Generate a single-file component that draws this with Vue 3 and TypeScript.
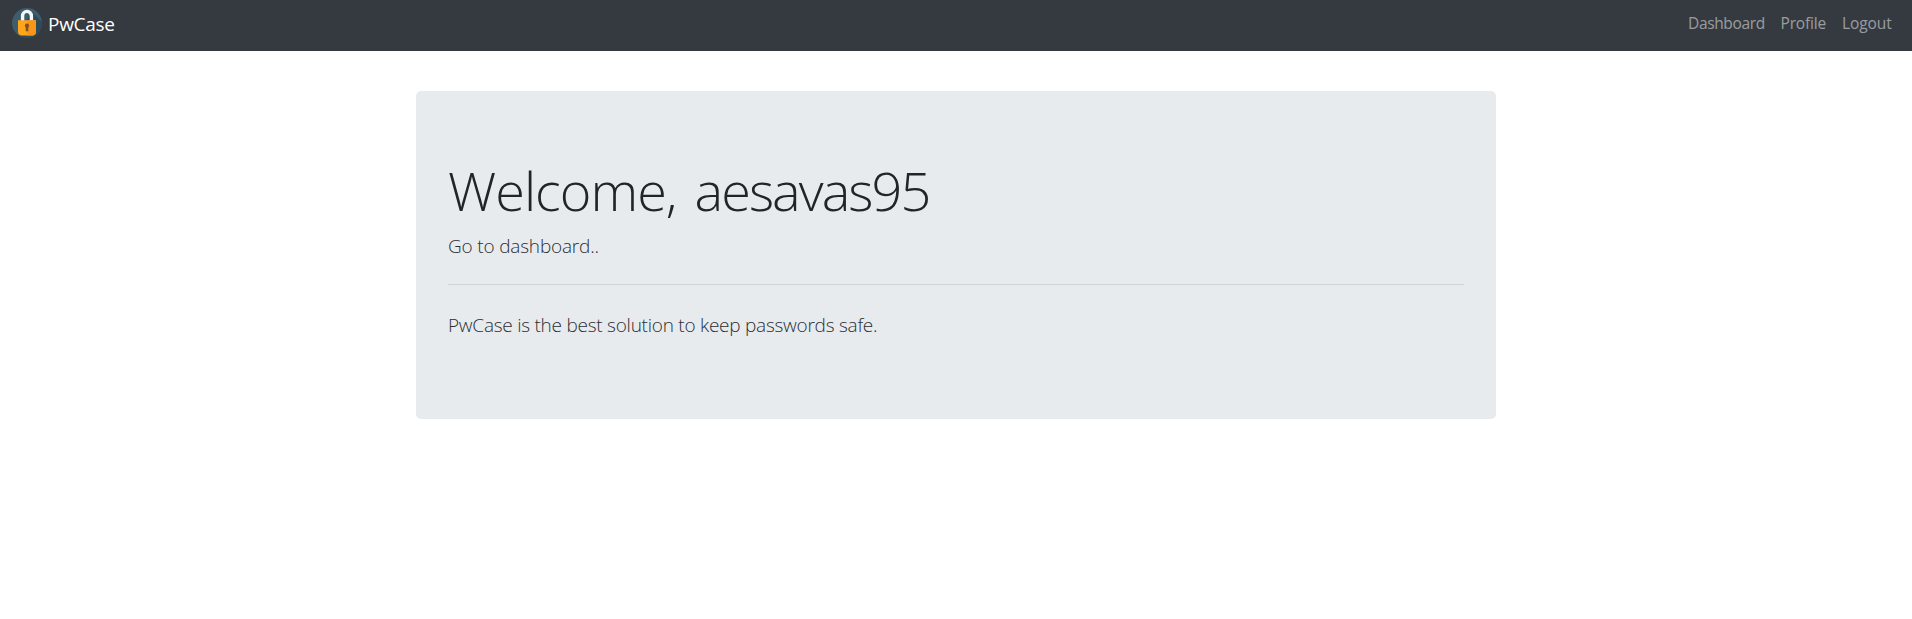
<script setup lang="ts">
interface NavItem {
  label: string
  cls: string
}

const username = 'aesavas95'
const navItems: NavItem[] = [
  { label: 'Dashboard', cls: 'dashboard' },
  { label: 'Profile', cls: 'profile' },
  { label: 'Logout', cls: 'logout' },
]
</script>

<template>
  <div class="page">
    <header class="navbar">
      <a class="brand">
        <svg class="logo" width="30" height="30" viewBox="0 0 30 30" aria-hidden="true">
          <defs>
            <clipPath id="disc"><circle cx="15" cy="15" r="15" /></clipPath>
          </defs>
          <circle cx="15" cy="15" r="15" fill="#3e5d6c" />
          <path d="M19.5 3.5 L32 16 V32 H14 L7 27 Z" fill="#2d4a5a" clip-path="url(#disc)" />
          <path d="M10.6 13.5 V8 a4.4 4.6 0 0 1 8.8 0 V13.5" fill="none" stroke="#f4f7fa" stroke-width="3.4" />
          <path d="M6 12.3 H24 V23.5 a4 4 0 0 1 -4 4 H10 A4 4 0 0 1 6 23.5 Z" fill="#ffa51c" />
          <path d="M15 12.3 H24 V23.5 a4 4 0 0 1 -4 4 H15 Z" fill="#f8961a" />
          <path d="M15 15.6 a2.1 2.1 0 0 1 1.3 3.8 V23.3 H13.7 V19.4 A2.1 2.1 0 0 1 15 15.6 Z" fill="#83501f" />
        </svg>
        <span class="brand-name">PwCase</span>
      </a>
      <nav class="links">
        <a v-for="item in navItems" :key="item.label" class="link" :class="item.cls">{{ item.label }}</a>
      </nav>
    </header>

    <main class="jumbotron">
      <h1 class="title">Welcome, <span class="user">{{ username }}</span></h1>
      <p class="lead go">Go to dashboard..</p>
      <hr class="rule" />
      <p class="lead about">PwCase is the best solution to keep passwords safe.</p>
    </main>
  </div>
</template>

<style>
body {
  margin: 0;
  background: #fff;
}
</style>

<style scoped>
.page {
  font-family: "Open Sans", "Noto Sans", sans-serif;
  color: #212529;
}

.navbar {
  box-sizing: border-box;
  height: 51px;
  padding: 0 12px;
  display: flex;
  justify-content: space-between;
  background: #343a40;
}

.brand {
  display: flex;
  gap: 6px;
  padding-top: 8px;
  color: #fff;
}

.logo {
  display: block;
}

.brand-name {
  font-size: 19px;
  line-height: 32px;
  letter-spacing: -0.3px;
}

.links {
  display: flex;
  gap: 16px;
  padding: 11px 8px 0 0;
}

.link {
  font-size: 15.5px;
  line-height: 24px;
  white-space: nowrap;
  color: rgba(255, 255, 255, 0.5);
}

.dashboard {
  width: 76.5px;
  letter-spacing: -0.35px;
}

.profile {
  width: 45.5px;
  letter-spacing: -0.15px;
}

.logout {
  width: 50px;
  letter-spacing: -0.1px;
}

.jumbotron {
  box-sizing: border-box;
  width: 1080px;
  height: 328px;
  margin: 40px auto 0;
  padding: 64px 32px;
  border-radius: 5px;
  background: #e8ebee;
}

.title {
  margin: 0 0 8px;
  padding-top: 4px;
  font-size: 54px;
  font-weight: 300;
  line-height: 63px;
  letter-spacing: -0.98px;
  word-spacing: 5px;
}

.user {
  letter-spacing: -1.95px;
}

.lead {
  margin: 0;
  padding-top: 2px;
  font-size: 19px;
  font-weight: 300;
  line-height: 28px;
  color: #2b2f34;
}

.go {
  letter-spacing: -0.18px;
}

.about {
  letter-spacing: -0.25px;
}

.rule {
  height: 1px;
  margin: 24px 0;
  border: 0;
  background: #d0d4d7;
}
</style>
